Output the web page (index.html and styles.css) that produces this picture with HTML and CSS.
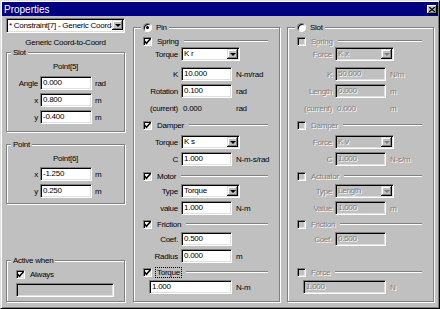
FILE: index.html
```html
<!DOCTYPE html>
<html lang="en">
<head>
  <meta charset="UTF-8">
  <title>Properties</title>
  <link rel="stylesheet" href="styles.css">
</head>
<body>
  <div class="window">
    <div class="titlebar">
      <span class="title">Properties</span>
      <span class="close">
        <svg width="6" height="5" viewBox="0 0 6 5"><path d="M0 0l6 5M6 0l-6 5" stroke="#000" stroke-width="1.3"/></svg>
      </span>
    </div>

    <div class="content">
      <!-- left column: constraint picker and slot/point coords -->
      <div class="left">
        <div class="combo top-combo"><span class="val">* Constraint[7] - Generic Coord-to-Coord</span><span class="arrow"></span></div>
        <div class="caption">Generic Coord-to-Coord</div>

        <div class="group slot-box">
          <span class="legend">Slot</span>
          <div class="heading">Point[5]</div>
          <div class="lrow"><label>Angle</label><span class="field">0.000</span><span class="unit">rad</span></div>
          <div class="lrow"><label>x</label><span class="field">0.800</span><span class="unit">m</span></div>
          <div class="lrow"><label>y</label><span class="field">-0.400</span><span class="unit">m</span></div>
        </div>

        <div class="group point-box">
          <span class="legend">Point</span>
          <div class="heading">Point[6]</div>
          <div class="lrow first"><label>x</label><span class="field">-1.250</span><span class="unit">m</span></div>
          <div class="lrow"><label>y</label><span class="field">0.250</span><span class="unit">m</span></div>
        </div>

        <div class="group active-box">
          <span class="legend">Active when</span>
          <div class="check always"><span class="cb"><svg width="7" height="7" viewBox="0 0 7 7"><path d="M0.5 3l2 2.2 4-4.5" fill="none" stroke="#000" stroke-width="1.6"/></svg></span><span class="txt">Always</span></div>
          <div class="field dis wide-field"></div>
        </div>
      </div>

      <!-- pin options -->
      <div class="group opt">
        <div class="legend"><span class="radio on"></span><span>Pin</span></div>
        <div class="check first"><span class="cb"><svg width="7" height="7" viewBox="0 0 7 7"><path d="M0.5 3l2 2.2 4-4.5" fill="none" stroke="#000" stroke-width="1.6"/></svg></span><span class="txt">Spring</span><span class="rule"></span></div>
        <div class="row tight"><label>Torque</label><span class="combo"><span class="val">K r</span><span class="arrow"></span></span></div>
        <div class="row loose"><label>K</label><span class="field">10.000</span><span class="unit">N-m/rad</span></div>
        <div class="row"><label>Rotation</label><span class="field">0.100</span><span class="unit">rad</span></div>
        <div class="row"><label>(current)</label><span class="readout">0.000</span><span class="unit">rad</span></div>
        <div class="check"><span class="cb"><svg width="7" height="7" viewBox="0 0 7 7"><path d="M0.5 3l2 2.2 4-4.5" fill="none" stroke="#000" stroke-width="1.6"/></svg></span><span class="txt">Damper</span><span class="rule"></span></div>
        <div class="row after-check"><label>Torque</label><span class="combo"><span class="val">K s</span><span class="arrow"></span></span></div>
        <div class="row"><label>C</label><span class="field">1.000</span><span class="unit">N-m-s/rad</span></div>
        <div class="check"><span class="cb"><svg width="7" height="7" viewBox="0 0 7 7"><path d="M0.5 3l2 2.2 4-4.5" fill="none" stroke="#000" stroke-width="1.6"/></svg></span><span class="txt">Motor</span><span class="rule"></span></div>
        <div class="row"><label>Type</label><span class="combo"><span class="val">Torque</span><span class="arrow"></span></span></div>
        <div class="row"><label>value</label><span class="field">1.000</span><span class="unit">N-m</span></div>
        <div class="check short"><span class="cb"><svg width="7" height="7" viewBox="0 0 7 7"><path d="M0.5 3l2 2.2 4-4.5" fill="none" stroke="#000" stroke-width="1.6"/></svg></span><span class="txt">Friction</span><span class="rule"></span></div>
        <div class="row"><label>Coef.</label><span class="field">0.500</span></div>
        <div class="row"><label>Radius</label><span class="field">0.000</span><span class="unit">m</span></div>
        <div class="check short"><span class="cb"><svg width="7" height="7" viewBox="0 0 7 7"><path d="M0.5 3l2 2.2 4-4.5" fill="none" stroke="#000" stroke-width="1.6"/></svg></span><span class="txt focus">Torque</span><span class="rule"></span></div>
        <div class="row solo"><span class="field long">1.000</span><span class="unit">N-m</span></div>
      </div>

      <!-- slot options, disabled -->
      <div class="group opt off">
        <div class="legend"><span class="radio"></span><span class="en">Slot</span></div>
        <div class="check first"><span class="cb"></span><span class="txt">Spring</span><span class="rule"></span></div>
        <div class="row tight"><label>Force</label><span class="combo"><span class="val">K x</span><span class="arrow"></span></span></div>
        <div class="row loose"><label>K</label><span class="field">50.000</span><span class="unit">N/m</span></div>
        <div class="row"><label>Length</label><span class="field">0.000</span><span class="unit">m</span></div>
        <div class="row"><label>(current)</label><span class="readout">0.000</span><span class="unit">m</span></div>
        <div class="check"><span class="cb"></span><span class="txt">Damper</span><span class="rule"></span></div>
        <div class="row after-check"><label>Force</label><span class="combo"><span class="val">K v</span><span class="arrow"></span></span></div>
        <div class="row"><label>C</label><span class="field">1.000</span><span class="unit">N-s/m</span></div>
        <div class="check"><span class="cb"></span><span class="txt">Actuator</span><span class="rule"></span></div>
        <div class="row"><label>Type</label><span class="combo"><span class="val">Length</span><span class="arrow"></span></span></div>
        <div class="row"><label>Value</label><span class="field">1.000</span><span class="unit">m</span></div>
        <div class="check short"><span class="cb"></span><span class="txt">Friction</span><span class="rule"></span></div>
        <div class="row"><label>Coef.</label><span class="field">0.500</span></div>
        <div class="row"></div>
        <div class="check short"><span class="cb"></span><span class="txt">Force</span><span class="rule"></span></div>
        <div class="row solo"><span class="field long">1.000</span><span class="unit">N</span></div>
      </div>
    </div>
  </div>
</body>
</html>
```

FILE: styles.css
```css
body {
  margin: 0;
  background: #c0c0c0;
  font-family: "Liberation Sans", Arial, sans-serif;
  font-size: 8px;
  letter-spacing: -0.25px;
  color: #000;
}

.window {
  width: 440px;
  height: 309px;
  box-sizing: border-box;
  border: 1px solid;
  border-color: #dfdfdf #000 #000 #dfdfdf;
  box-shadow: inset 1px 1px #fff, inset -1px -1px #808080;
  padding: 1px;
  display: flex;
  flex-direction: column;
}

.titlebar {
  height: 14px;
  flex: none;
  background: #000080;
  color: #fff;
  display: flex;
  align-items: center;
  justify-content: space-between;
  padding: 0 1px 0 2px;
}

.titlebar .title {
  font-size: 10px;
  letter-spacing: 0;
}

.close {
  width: 10px;
  height: 9px;
  background: #c0c0c0;
  box-shadow: inset -1px -1px #000, inset 1px 1px #fff, inset -2px -2px #808080;
  display: flex;
  align-items: center;
  justify-content: center;
}

.content {
  display: flex;
  flex: 1;
  padding: 2px 0 0 4px;
}

/* etched group box */
.group {
  position: relative;
  box-sizing: border-box;
  border: 1px solid #808080;
  box-shadow: inset 1px 1px #fff, 1px 1px #fff;
}

.legend {
  position: absolute;
  top: -6px;
  left: 4px;
  padding: 0 2px;
  line-height: 11px;
  background: #c0c0c0;
  display: flex;
  align-items: center;
  gap: 4px;
}

/* left column */
.left {
  width: 119px;
  display: flex;
  flex-direction: column;
  padding-bottom: 5px;
}

.caption {
  margin-top: 4px;
  line-height: 12px;
  text-align: center;
}

.slot-box {
  margin-top: 3px;
  padding-bottom: 7px;
}

.point-box {
  margin-top: 12px;
  padding-bottom: 5px;
}

.heading {
  margin-top: 8px;
  line-height: 12px;
  text-align: center;
}

.lrow {
  display: flex;
  align-items: center;
  height: 14px;
  margin-top: 3px;
}

.lrow.first {
  margin-top: 2px;
}

.lrow label {
  width: 31px;
  margin-right: 2px;
  text-align: right;
}

.lrow .field {
  width: 52px;
}

.lrow .unit {
  margin-left: 3px;
}

.active-box {
  margin-top: auto;
  padding: 0 0 4px 9px;
}

.active-box .check {
  margin-top: 8px;
  padding-left: 0;
}

.wide-field {
  margin-top: 4px;
  width: 98px;
  height: 12px;
}

/* sunken controls */
.field,
.combo {
  box-sizing: border-box;
  height: 14px;
  background: #fff;
  border: 1px solid;
  border-color: #808080 #fff #fff #808080;
  box-shadow: inset 1px 1px #000, inset -1px -1px #dfdfdf;
  padding: 0 2px;
  line-height: 12px;
  white-space: nowrap;
  overflow: hidden;
}

.field.dis {
  background: #c0c0c0;
}

.combo {
  display: flex;
  padding-right: 1px;
}

.combo .val {
  flex: 1;
  overflow: hidden;
}

.arrow {
  width: 11px;
  height: 10px;
  margin-top: 1px;
  flex: none;
  background: #c0c0c0;
  box-shadow: inset -1px -1px #000, inset 1px 1px #dfdfdf, inset -2px -2px #808080, inset 2px 2px #fff;
  display: flex;
  align-items: center;
  justify-content: center;
}

.arrow::after {
  content: "";
  border-left: 3px solid transparent;
  border-right: 3px solid transparent;
  border-top: 3px solid #000;
}

.top-combo {
  height: 15px;
  line-height: 13px;
}

/* option groups */
.opt {
  width: 147px;
  height: 275px;
  margin-left: 8px;
  margin-top: 9px;
}

.opt + .opt {
  margin-left: 7px;
}

.opt .legend {
  left: 7px;
}

.check {
  display: flex;
  align-items: center;
  height: 10px;
  margin-top: 5px;
  padding-left: 9px;
}

.check.first {
  margin-top: 8px;
}

.check.short {
  margin-top: 4px;
}

.cb {
  box-sizing: border-box;
  width: 9px;
  height: 9px;
  flex: none;
  background: #fff;
  border: 1px solid;
  border-color: #808080 #fff #fff #808080;
  box-shadow: inset 1px 1px #000, inset -1px -1px #dfdfdf;
  display: flex;
  align-items: center;
  justify-content: center;
}

.check .txt {
  margin-left: 5px;
}

.focus {
  outline: 1px dotted #000;
  outline-offset: 0;
  padding: 0 1px;
  margin-left: 4px !important;
}

.rule {
  flex: 1;
  height: 0;
  margin: 0 11px 0 5px;
  border-top: 1px solid #808080;
  border-bottom: 1px solid #fff;
}

.radio {
  box-sizing: border-box;
  width: 9px;
  height: 9px;
  border-radius: 50%;
  background: #fff;
  border: 1px solid;
  border-color: #808080 #fff #fff #808080;
  box-shadow: inset 1px 1px #000;
  position: relative;
}

.radio.on::after {
  content: "";
  position: absolute;
  left: 2px;
  top: 2px;
  width: 3px;
  height: 3px;
  border-radius: 50%;
  background: #000;
}

.row {
  display: flex;
  align-items: center;
  height: 14px;
  margin-top: 3px;
}

.row.tight {
  margin-top: 1px;
}

.row.loose {
  margin-top: 6px;
}

.row.after-check {
  margin-top: 5px;
}

.row label {
  width: 44px;
  margin-right: 3px;
  text-align: right;
  flex: none;
}

.row .field {
  width: 51px;
}

.row .combo {
  width: 59px;
}

.row .readout {
  width: 51px;
  padding-left: 2px;
  box-sizing: border-box;
}

.row .unit {
  margin-left: 4px;
}

.row.solo {
  padding-left: 15px;
}

.row .field.long {
  width: 83px;
}

/* disabled slot group */
.off .txt,
.off label,
.off .unit,
.off .readout,
.off .field,
.off .combo .val {
  color: #808080;
  text-shadow: 1px 1px #fff;
}

.off .field,
.off .combo,
.off .cb {
  background: #c0c0c0;
}

.off .arrow::after {
  border-top-color: #808080;
}
```
